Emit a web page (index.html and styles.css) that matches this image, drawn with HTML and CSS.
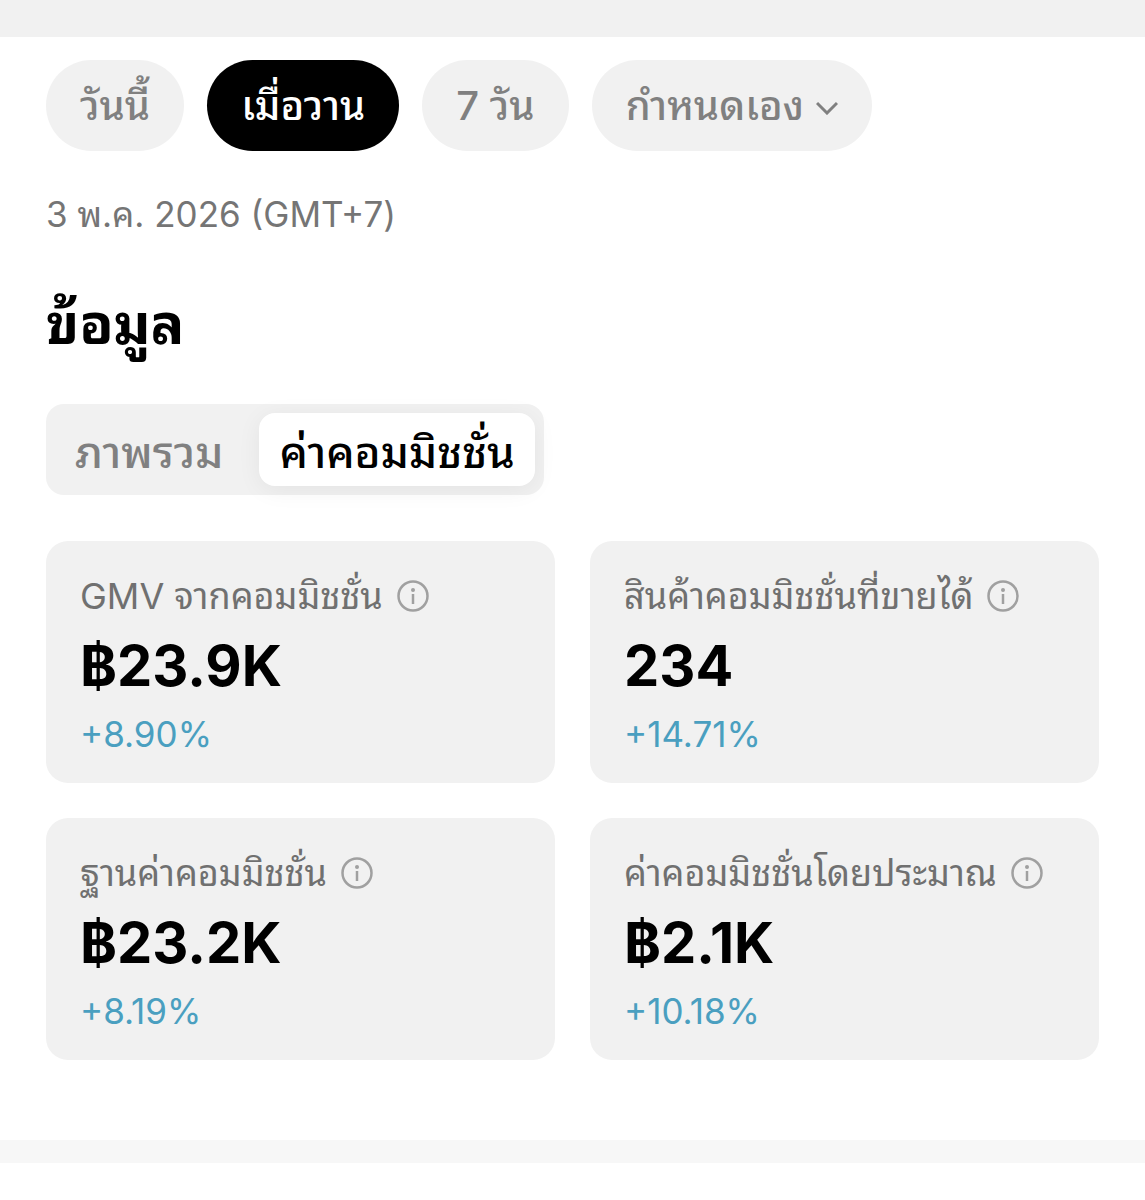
FILE: index.html
```html
<!DOCTYPE html>
<html lang="th">
<head>
    <meta charset="UTF-8">
    <meta name="viewport" content="width=device-width, initial-scale=1.0">
    <title>ข้อมูล</title>
    <link rel="stylesheet" href="styles.css">
</head>
<body>
    <main>
        <!-- Date range filters -->
        <div class="filters">
            <button type="button" class="chip">วันนี้</button>
            <button type="button" class="chip active">เมื่อวาน</button>
            <button type="button" class="chip">7 วัน</button>
            <button type="button" class="chip">กำหนดเอง
                <svg class="chevron" viewBox="0 0 22 14" aria-hidden="true"><path d="M1 2l10 10 10-10"/></svg>
            </button>
        </div>
        <p class="date">3 พ.ค. 2026 (GMT+7)</p>

        <!-- Data Section -->
        <h1>ข้อมูล</h1>
        <div class="tabs">
            <button type="button" class="tab">ภาพรวม</button>
            <button type="button" class="tab selected">ค่าคอมมิชชั่น</button>
        </div>

        <section class="cards">
            <article class="card">
                <h2>GMV จากคอมมิชชั่น
                    <svg class="info" viewBox="0 0 32 32" aria-hidden="true"><circle cx="16" cy="16" r="14.5"/><path d="M16 14v10"/><circle class="dot" cx="16" cy="10" r="2"/></svg>
                </h2>
                <p class="value">฿23.9K</p>
                <p class="change">+8.90%</p>
            </article>
            <article class="card">
                <h2>สินค้าคอมมิชชั่นที่ขายได้
                    <svg class="info" viewBox="0 0 32 32" aria-hidden="true"><circle cx="16" cy="16" r="14.5"/><path d="M16 14v10"/><circle class="dot" cx="16" cy="10" r="2"/></svg>
                </h2>
                <p class="value">234</p>
                <p class="change">+14.71%</p>
            </article>
            <article class="card">
                <h2>ฐานค่าคอมมิชชั่น
                    <svg class="info" viewBox="0 0 32 32" aria-hidden="true"><circle cx="16" cy="16" r="14.5"/><path d="M16 14v10"/><circle class="dot" cx="16" cy="10" r="2"/></svg>
                </h2>
                <p class="value">฿23.2K</p>
                <p class="change">+8.19%</p>
            </article>
            <article class="card">
                <h2>ค่าคอมมิชชั่นโดยประมาณ
                    <svg class="info" viewBox="0 0 32 32" aria-hidden="true"><circle cx="16" cy="16" r="14.5"/><path d="M16 14v10"/><circle class="dot" cx="16" cy="10" r="2"/></svg>
                </h2>
                <p class="value">฿2.1K</p>
                <p class="change">+10.18%</p>
            </article>
        </section>
    </main>
</body>
</html>
```
FILE: styles.css
```css
body, h1, h2, p, button {
    margin: 0;
    padding: 0;
    box-sizing: border-box;
}

body {
    font-family: Inter, Thonburi, "Noto Sans Thai Looped", Loma, Waree, "Noto Sans", sans-serif;
    background: #fff;
    color: #000;
}

main {
    border-top: 37px solid #f1f1f1;
    border-bottom: 23px solid #f7f7f7;
    padding: 23px 46px 80px;
}

button {
    border: none;
    font-family: inherit;
    cursor: pointer;
}

/* Date range filters */
.filters {
    display: flex;
    gap: 23px;
}

.chip {
    display: flex;
    align-items: center;
    gap: 12px;
    height: 91px;
    padding: 0 34px 8px;
    border-radius: 46px;
    background: #f1f1f1;
    color: #808080;
    font-size: 40px;
    font-weight: 500;
    white-space: nowrap;
}

.chip.active {
    background: #000;
    color: #fff;
}

.chevron {
    width: 22px;
    height: 14px;
    margin-top: 12px;
    fill: none;
    stroke: #808080;
    stroke-width: 3;
}

.date {
    margin-top: 40px;
    color: #757575;
    font-size: 35px;
    line-height: 46px;
}

h1 {
    margin-top: 52px;
    font-size: 56px;
    font-weight: 700;
    line-height: 70px;
}

/* Tabs */
.tabs {
    display: inline-flex;
    gap: 16px;
    margin-top: 45px;
    padding: 9px;
    border-radius: 18px;
    background: #f1f1f1;
}

.tab {
    height: 73px;
    padding: 0 20px 6px;
    border-radius: 16px;
    background: none;
    color: #808080;
    font-size: 44px;
    font-weight: 500;
}

.tab.selected {
    background: #fff;
    color: #000;
    box-shadow: 0 4px 24px rgba(0, 0, 0, 0.06);
}

/* Cards */
.cards {
    display: grid;
    grid-template-columns: 1fr 1fr;
    gap: 35px;
    margin-top: 46px;
}

.card {
    padding: 32px 34px 26px;
    border-radius: 22px;
    background: #f1f1f1;
}

.card h2 {
    display: flex;
    align-items: center;
    gap: 14px;
    color: #707070;
    font-size: 36px;
    font-weight: 400;
    line-height: 46px;
    white-space: nowrap;
}

.info {
    width: 32px;
    height: 32px;
    fill: none;
    stroke: #a0a0a0;
    stroke-width: 2.5;
}

.info .dot {
    fill: #a0a0a0;
    stroke: none;
}

.value {
    margin-top: 12px;
    font-size: 56px;
    font-weight: 700;
    line-height: 70px;
}

.change {
    margin-top: 10px;
    color: #4a9fc0;
    font-size: 35px;
    line-height: 46px;
}
```
